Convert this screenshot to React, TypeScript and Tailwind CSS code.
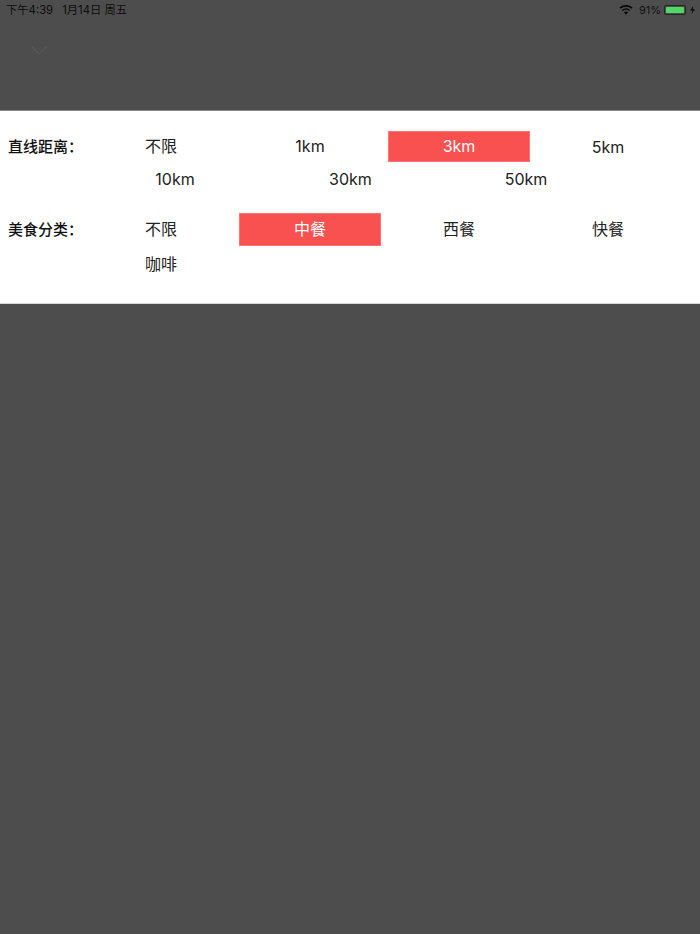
const FONT = 'Inter, "Noto Sans CJK SC", sans-serif';

function Wifi() {
  return (
    <svg width="14" height="10" viewBox="0 0 14 10" className="block">
      <path d="M7 9.8 L4.9 7.3 A3.2 3.2 0 0 1 9.1 7.3 Z" fill="#0a0a0a" />
      <path d="M3.8 6.1 A5 5 0 0 1 10.2 6.1 L11.2 5 A6.6 6.6 0 0 0 2.8 5 Z" fill="#0a0a0a" />
      <path d="M1.7 3.8 A8 8 0 0 1 12.3 3.8 L13.6 2.5 A9.8 9.8 0 0 0 0.4 2.5 Z" fill="#0a0a0a" />
    </svg>
  );
}

function Cell({ label, active, h }: { label: string; active?: boolean; h: string }) {
  return (
    <div
      className={`${h} pb-[2px] flex items-center justify-center text-[16px] ${
        active ? "bg-[#f95050] border border-[#fb7474] text-white" : "text-[#222222]"
      }`}
    >
      {label}
    </div>
  );
}

export default function App() {
  return (
    <div className="w-[700px] h-[934px] bg-[#4d4d4d] overflow-hidden flex flex-col" style={{ fontFamily: FONT }}>
      <div className="h-5 flex items-center justify-between pl-[6px] pr-[5px] text-[11px] text-[#0d0d0d] shrink-0">
        <div className="flex gap-[9px]">
          <span className="text-[11.3px]">下午4:39</span>
          <span className="text-[11.3px]">1月14日 周五</span>
        </div>
        <div className="flex items-center">
          <Wifi />
          <span className="ml-[6px] w-[21px] text-[#111111]">91%</span>
          <div className="ml-[4px] w-[22px] h-[10px] rounded-[2px] border border-[#262626] p-[1px]">
            <div className="w-full h-full bg-[#4cd964] rounded-[1px]" />
          </div>
          <svg width="5" height="8" viewBox="0 0 5 8" className="ml-[4px]">
            <path d="M3 0 L0 4.6 H2 L1.6 8 L5 3.2 H2.8 Z" fill="#111" />
          </svg>
        </div>
      </div>
      <div className="h-[90px] pt-[26px] pl-[31px] shrink-0">
        <svg width="16" height="9" viewBox="0 0 16 9" className="block">
          <path d="M0.5 0.5 L8 8 L15.5 0.5" fill="none" stroke="#5c5c5c" strokeWidth="1" />
        </svg>
      </div>
      <div className="h-[194px] bg-white shrink-0 pt-[21px] border-t border-t-[#8c8c8c] border-b border-b-[#d9d9d9]">
        <div className="flex -mt-px">
          <div className="w-[90px] pl-2 pt-[5px] text-[15px] font-medium text-[#111111] leading-[22px]">直线距离：</div>
          <div className="flex-1">
            <div className="grid grid-cols-[142px_142px_142px_142px] gap-x-[7px]">
              <Cell label="不限" h="h-[31px]" />
              <Cell label="1km" h="h-[31px]" />
              <Cell label="3km" active h="h-[31px]" />
              <Cell label="5km" h="h-[31px] pt-[2px]" />
            </div>
            <div className="grid grid-cols-[170px_170px_170px] gap-x-[5.5px] mt-[2px]">
              <Cell label="10km" h="h-[32px]" />
              <Cell label="30km" h="h-[32px]" />
              <Cell label="50km" h="h-[32px]" />
            </div>
          </div>
        </div>
        <div className="flex mt-[17px]">
          <div className="w-[90px] pl-2 pt-[6px] text-[15px] font-medium text-[#111111] leading-[22px]">美食分类：</div>
          <div className="flex-1">
            <div className="grid grid-cols-[142px_142px_142px_142px] gap-x-[7px] gap-y-[2px]">
              <Cell label="不限" h="h-[33px]" />
              <Cell label="中餐" active h="h-[33px]" />
              <Cell label="西餐" h="h-[33px]" />
              <Cell label="快餐" h="h-[33px]" />
              <Cell label="咖啡" h="h-[33px]" />
            </div>
          </div>
        </div>
      </div>
    </div>
  );
}
